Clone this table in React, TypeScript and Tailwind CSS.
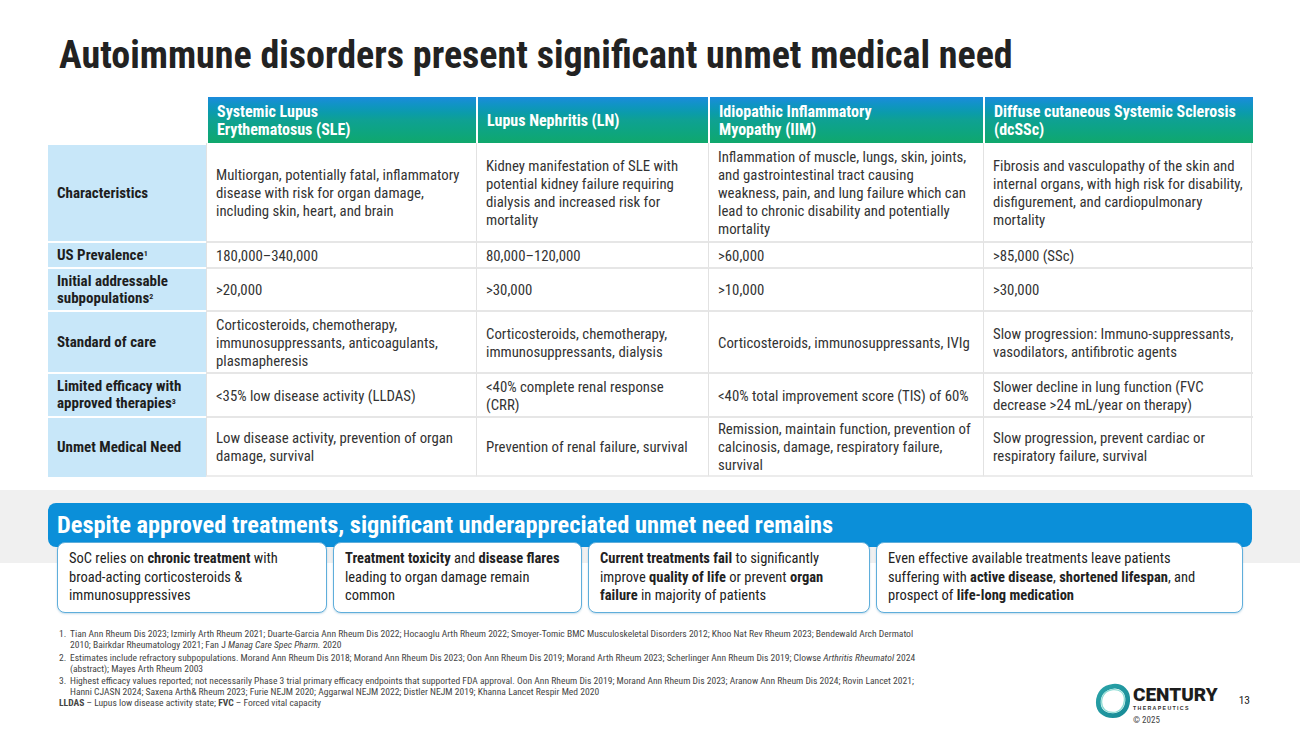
import React from "react";

const F = "font-['Roboto_Condensed','Liberation_Sans_Narrow','DejaVu_Sans_Condensed',sans-serif]";

type Row = { label: React.ReactNode; cells: string[] };

const rows: Row[] = [
  {
    label: "Characteristics",
    cells: [
      "Multiorgan, potentially fatal, inflammatory disease with risk for organ damage, including skin, heart, and brain",
      "Kidney manifestation of SLE with potential kidney failure requiring dialysis and increased risk for mortality",
      "Inflammation of muscle, lungs, skin, joints, and gastrointestinal tract causing weakness, pain, and lung failure which can lead to chronic disability and potentially mortality",
      "Fibrosis and vasculopathy of the skin and internal organs, with high risk for disability, disfigurement, and cardiopulmonary mortality",
    ],
  },
  {
    label: (
      <>
        US Prevalence<sup className="text-[8px]">1</sup>
      </>
    ),
    cells: ["180,000–340,000", "80,000–120,000", ">60,000", ">85,000 (SSc)"],
  },
  {
    label: (
      <>
        Initial addressable subpopulations<sup className="text-[8px]">2</sup>
      </>
    ),
    cells: [">20,000", ">30,000", ">10,000", ">30,000"],
  },
  {
    label: "Standard of care",
    cells: [
      "Corticosteroids, chemotherapy, immunosuppressants, anticoagulants, plasmapheresis",
      "Corticosteroids, chemotherapy, immunosuppressants, dialysis",
      "Corticosteroids, immunosuppressants, IVIg",
      "Slow progression: Immuno-suppressants, vasodilators, antifibrotic agents",
    ],
  },
  {
    label: (
      <>
        Limited efficacy with approved therapies<sup className="text-[8px]">3</sup>
      </>
    ),
    cells: [
      "<35% low disease activity (LLDAS)",
      "<40% complete renal response (CRR)",
      "<40% total improvement score (TIS) of 60%",
      "Slower decline in lung function (FVC decrease >24 mL/year on therapy)",
    ],
  },
  {
    label: "Unmet Medical Need",
    cells: [
      "Low disease activity, prevention of organ damage, survival",
      "Prevention of renal failure, survival",
      "Remission, maintain function, prevention of calcinosis, damage, respiratory failure, survival",
      "Slow progression, prevent cardiac or respiratory failure, survival",
    ],
  },
];

const headers = [
  ["Systemic Lupus", "Erythematosus (SLE)"],
  ["Lupus Nephritis (LN)"],
  ["Idiopathic Inflammatory", "Myopathy (IIM)"],
  ["Diffuse cutaneous Systemic Sclerosis", "(dcSSc)"],
];

const cellPad = ["pr-[5px]", "pr-[12px]", "pr-[11px]", "pr-[5px]"];

function Logo() {
  return (
    <svg width="36" height="36" viewBox="0 0 38 38">
      <defs>
        <linearGradient id="lg" x1="0" y1="0" x2="1" y2="1">
          <stop offset="0" stopColor="#2aa3a8" />
          <stop offset="1" stopColor="#178a96" />
        </linearGradient>
      </defs>
      <path
        d="M19 3.5 C28.5 2.5 35 9 34.5 18.5 C34 28 27.5 34.5 19 34.5 C9.5 34.5 3.5 29 3.5 20.5 C3.5 11 9.5 4.5 19 3.5 Z"
        fill="none"
        stroke="url(#lg)"
        strokeWidth="5"
      />
      <path
        d="M19 7 C26.5 6.3 31.5 11 31 18.5 C30.5 26 25.5 31 19 31 C11.5 31 7 26.8 7 20.3 C7 13 11.5 7.8 19 7 Z"
        fill="none"
        stroke="#8adbd3"
        strokeWidth="1.3"
      />
    </svg>
  );
}

const card =
  "h-[71px] bg-white border border-[#5faedb] rounded-[8px] pl-[11px] pt-[7px] shadow-[0_1px_2px_rgba(30,120,170,0.25)]";

export default function App() {
  return (
    <div className={`w-[1300px] h-[731px] bg-white overflow-hidden ${F} text-[#333]`}>
      <h1 className="pl-[59px] pt-[33px] text-[38px] leading-[45px] font-bold text-[#222]">
        Autoimmune disorders present significant unmet medical need
      </h1>

      <div className="mx-[48px] mt-[19px] grid grid-cols-[158px_270px_232px_275px_270px] grid-rows-[46px_98px_26px_43px_62px_44px_61px] border-r border-[#e4e4e4]">
        <div className="bg-white" />
        {headers.map((h, i) => (
          <div
            key={i}
            className="bg-linear-to-b from-[#1b8bdc] via-[#0fa193] to-[#10a86c] text-white font-bold text-[16px] leading-[18px] pl-[9px] pt-[1px] flex flex-col justify-center border-l-2 border-white"
          >
            {h.map((l, j) => (
              <span key={j} className="whitespace-nowrap">
                {l}
              </span>
            ))}
          </div>
        ))}
        {rows.map((r, ri) => (
          <React.Fragment key={ri}>
            <div className="bg-[#c8e7f9] border-t-2 border-white flex items-center pl-[9px] pr-[6px] text-[15px] leading-[17px] font-bold text-[#1e1e1e]">
              <span>{r.label}</span>
            </div>
            {r.cells.map((c, ci) => (
              <div
                key={ci}
                className={`flex items-center pl-[9px] ${cellPad[ci]} pt-[1px] text-[14.8px] leading-[18px] text-[#333] border-l border-[#e2e2e2] ${
                  ri === 0 ? "" : "border-t-2 border-t-[#e6e6e6]"
                } ${ri === rows.length - 1 ? "border-b-2 border-b-[#ececec]" : ""}`}
              >
                <span>{c}</span>
              </div>
            ))}
          </React.Fragment>
        ))}
      </div>

      <div className="mt-[13px] bg-[#f0f0f0] h-[73px] pt-[13px]">
        <div className="mx-[48px] h-[44px] rounded-[8px] bg-[#0b8fd9] pl-[9px] pt-[8px]">
          <span className="text-white font-bold text-[24.4px] leading-[28px]">
            Despite approved treatments, significant underappreciated unmet need remains
          </span>
        </div>
      </div>

      <div className="relative z-10 -mt-[21px] ml-[57px] flex gap-[6px] text-[14.5px] leading-[18.5px] text-[#222]">
        <div className={`w-[270px] pr-[8px] ${card}`}>
          SoC relies on <b>chronic treatment</b> with broad&#8209;acting corticosteroids &amp; immunosuppressives
        </div>
        <div className={`w-[249px] pr-[8px] ${card}`}>
          <b>Treatment toxicity</b> and <b>disease flares</b> leading to organ damage remain common
        </div>
        <div className={`w-[282px] pr-[8px] ${card}`}>
          <b>Current treatments fail</b> to significantly improve <b>quality of life</b> or prevent <b>organ failure</b> in majority of patients
        </div>
        <div className={`w-[367px] pr-[28px] ${card}`}>
          Even effective available treatments leave patients suffering with <b>active disease</b>, <b>shortened lifespan</b>, and prospect of <b>life&#8209;long medication</b>
        </div>
      </div>

      <div className="mt-[15px] pl-[59px] pr-[50px] flex justify-between items-start">
        <div className="w-[864px] text-[9.55px] leading-[11px] text-[#444]">
          <ol className="list-none">
            <li className="flex mb-[1.5px]">
              <span className="w-[11px] shrink-0">1.</span>
              <span>
                Tian Ann Rheum Dis 2023; Izmirly Arth Rheum 2021; Duarte-Garcia Ann Rheum Dis 2022; Hocaoglu Arth Rheum 2022; Smoyer-Tomic BMC Musculoskeletal Disorders 2012; Khoo Nat Rev Rheum 2023; Bendewald Arch Dermatol 2010; Bairkdar Rheumatology 2021; Fan J <i>Manag Care Spec Pharm.</i> 2020
              </span>
            </li>
            <li className="flex mb-[1.5px]">
              <span className="w-[11px] shrink-0">2.</span>
              <span>
                Estimates include refractory subpopulations. Morand Ann Rheum Dis 2018; Morand Ann Rheum Dis 2023; Oon Ann Rheum Dis 2019; Morand Arth Rheum 2023; Scherlinger Ann Rheum Dis 2019; Clowse <i>Arthritis Rheumatol</i> 2024 (abstract); Mayes Arth Rheum 2003
              </span>
            </li>
            <li className="flex">
              <span className="w-[11px] shrink-0">3.</span>
              <span>
                Highest efficacy values reported; not necessarily Phase 3 trial primary efficacy endpoints that supported FDA approval. Oon Ann Rheum Dis 2019; Morand Ann Rheum Dis 2023; Aranow Ann Rheum Dis 2024; Rovin Lancet 2021; Hanni CJASN 2024; Saxena Arth&amp; Rheum 2023; Furie NEJM 2020; Aggarwal NEJM 2022; Distler NEJM 2019; Khanna Lancet Respir Med 2020
              </span>
            </li>
          </ol>
          <div>
            <b>LLDAS</b> – Lupus low disease activity state; <b>FVC</b> – Forced vital capacity
          </div>
        </div>

        <div className="mt-[55px] flex items-start">
          <div className="flex items-start">
            <Logo />
            <div className="ml-[2px] mt-[2px] flex flex-col">
              <span className="font-['Roboto','Liberation_Sans',sans-serif] font-black text-[19px] leading-[19px] text-[#1d1d1d]">
                CENTURY
              </span>
              <span className="font-['Liberation_Sans','Arial',sans-serif] font-bold text-[5.3px] leading-[7px] tracking-[1.3px] text-[#333] mt-[1px]">
                THERAPEUTICS
              </span>
              <span className="text-[9px] leading-[12px] text-[#444] mt-[2px]">© 2025</span>
            </div>
          </div>
          <span className="ml-[21px] mt-[10px] text-[11.5px] leading-[14px] text-[#222]">13</span>
        </div>
      </div>
    </div>
  );
}
